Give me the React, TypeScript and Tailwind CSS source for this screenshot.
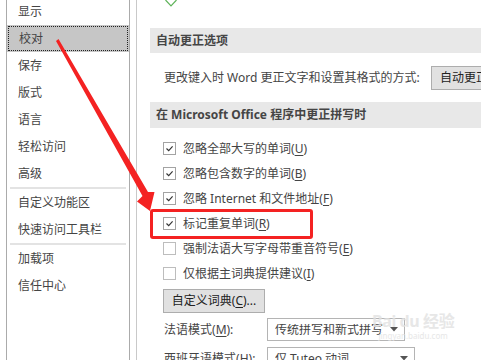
const navTop = ["显示", "校对", "保存", "版式", "语言", "轻松访问", "高级"]
const navMid = ["自定义功能区", "快速访问工具栏"]
const navBottom = ["加载项", "信任中心"]

function NavItem({ label, active }: { label: string; active?: boolean }) {
  return (
    <div
      className={
        active
          ? "h-[27px] shrink-0 flex items-center bg-[#c6c6c6] p-[1px]"
          : "h-[27px] shrink-0 flex items-center pl-[11px]"
      }
    >
      {active ? (
        <div className="w-full h-full flex items-center pl-[10px] border border-dotted border-[#222]">
          {label}
        </div>
      ) : (
        label
      )}
    </div>
  )
}

function Checkbox({ checked }: { checked: boolean }) {
  return (
    <span
      className={
        checked
          ? "w-[13px] h-[13px] border border-[#a3a3a3] bg-white flex items-center justify-center shrink-0"
          : "w-[13px] h-[13px] border border-[#bdbdbd] bg-white shrink-0"
      }
    >
      {checked && (
        <svg width="11" height="11" viewBox="0 0 11 11">
          <path d="M2.5 5.5 L4.7 7.6 L8.6 3.4" fill="none" stroke="#333" strokeWidth="1.2" />
        </svg>
      )}
    </span>
  )
}

// label with underlined access key, e.g. 标记重复单词(R)
function Mn({ pre, k, post = ")" }: { pre: string; k: string; post?: string }) {
  return (
    <span>
      {pre}(<span className="underline underline-offset-2">{k}</span>
      {post}
    </span>
  )
}

const checks: { checked: boolean; pre: string; k: string }[] = [
  { checked: true, pre: "忽略全部大写的单词", k: "U" },
  { checked: true, pre: "忽略包含数字的单词", k: "B" },
  { checked: true, pre: "忽略 Internet 和文件地址", k: "F" },
  { checked: true, pre: "标记重复单词", k: "R" },
  { checked: false, pre: "强制法语大写字母带重音符号", k: "E" },
  { checked: false, pre: "仅根据主词典提供建议", k: "I" },
]

function Select({ value, width }: { value: string; width: string }) {
  return (
    <div
      className={`${width} h-[23px] border border-[#b4b4b4] bg-white flex items-center pl-[7px] pr-[6px] shrink-0`}
    >
      <span className="flex-1 whitespace-nowrap overflow-hidden">{value}</span>
      <svg width="8" height="5" viewBox="0 0 8 5" className="ml-[4px] shrink-0">
        <path d="M0 0 H8 L4 4.5 Z" fill="#555" />
      </svg>
    </div>
  )
}

export default function App() {
  return (
    <div className="relative w-[481px] h-[360px] overflow-hidden bg-white flex text-[12px] leading-none text-[#444] font-['Noto_Sans','Noto_Sans_CJK_SC',sans-serif]">
      {/* left navigation */}
      <div className="ml-[6px] w-[124px] h-full border-x border-[#ababab] shrink-0">
        <div className="-mt-[2px] flex flex-col">
          {navTop.map((l) => (
            <NavItem key={l} label={l} active={l === "校对"} />
          ))}
          <div className="mx-[3px] h-[2px] shrink-0 bg-[#e3e3e3]" />
          {navMid.map((l) => (
            <NavItem key={l} label={l} />
          ))}
          <div className="mx-[3px] h-[2px] shrink-0 bg-[#e3e3e3]" />
          {navBottom.map((l) => (
            <NavItem key={l} label={l} />
          ))}
        </div>
      </div>

      {/* main panel */}
      <div className="ml-[6px] flex-1 h-full border-l border-[#c9c9c9] pl-[13px] flex flex-col overflow-hidden">
        <div className="h-[28px] shrink-0 pl-[15px]">
          <svg width="12" height="7" viewBox="0 0 12 7">
            <path d="M0.5 0 L6 5.8 L11.5 0" fill="none" stroke="#5fb35a" strokeWidth="1.2" />
          </svg>
        </div>

        <div className="h-[25px] shrink-0 bg-[#e8e8e8] flex items-center pl-[6px] font-bold text-[#454545]">
          自动更正选项
        </div>

        <div className="h-[49px] shrink-0 flex items-center pl-[14px] whitespace-nowrap">
          <span className="shrink-0">更改键入时 Word 更正文字和设置其格式的方式:</span>
          <div className="ml-auto -mr-[60px] w-[110px] h-[24px] shrink-0 border border-[#adadad] bg-[#e1e1e1] flex items-center pl-[8px] text-[#222]">
            自动更正选项(A)...
          </div>
        </div>

        <div className="h-[26px] shrink-0 bg-[#e8e8e8] flex items-center pl-[6px] font-bold text-[#454545] whitespace-nowrap">
          在 Microsoft Office 程序中更正拼写时
        </div>

        <div className="pt-[8px] pl-[13px] flex flex-col shrink-0">
          {checks.map((c) => (
            <div key={c.k} className="h-[25px] shrink-0 flex items-center gap-[7px] whitespace-nowrap">
              <Checkbox checked={c.checked} />
              <Mn pre={c.pre} k={c.k} />
            </div>
          ))}

          <div className="mt-[3px] w-[102px] h-[24px] shrink-0 border border-[#adadad] bg-[#e1e1e1] flex items-center justify-center text-[#222]">
            <Mn pre="自定义词典" k="C" post=")..." />
          </div>

          <div className="mt-[5px] shrink-0 flex items-center whitespace-nowrap">
            <span className="w-[104px] pl-[1px]">
              <Mn pre="法语模式" k="M" post="):" />
            </span>
            <Select value="传统拼写和新式拼写" width="w-[138px]" />
          </div>

          <div className="mt-[6px] shrink-0 flex items-center whitespace-nowrap">
            <span className="w-[104px] pl-[1px]">
              <Mn pre="西班牙语模式" k="H" post="):" />
            </span>
            <Select value="仅 Tuteo 动词" width="w-[148px]" />
          </div>
        </div>
      </div>

      {/* highlight box */}
      <div className="absolute left-[150px] top-[209px] w-[163px] h-[30px] border-[3px] border-[#f42222] rounded-[3px]" />

      {/* red arrow */}
      <svg className="absolute left-0 top-0" width="481" height="360" viewBox="0 0 481 360">
        <polygon
          points="56,41 58.5,39 148,192 154.5,192 150,211 137,201.5 142.5,196"
          fill="#f42222"
        />
      </svg>

      {/* watermark */}
      <div className="absolute left-[372px] top-[313px] flex flex-col items-center text-[#e2e2e2] opacity-80">
        <span className="text-[16px] font-bold tracking-tight">Bai du 经验</span>
        <span className="text-[8px] mt-[3px]">jingyan.baidu.com</span>
      </div>
    </div>
  )
}
